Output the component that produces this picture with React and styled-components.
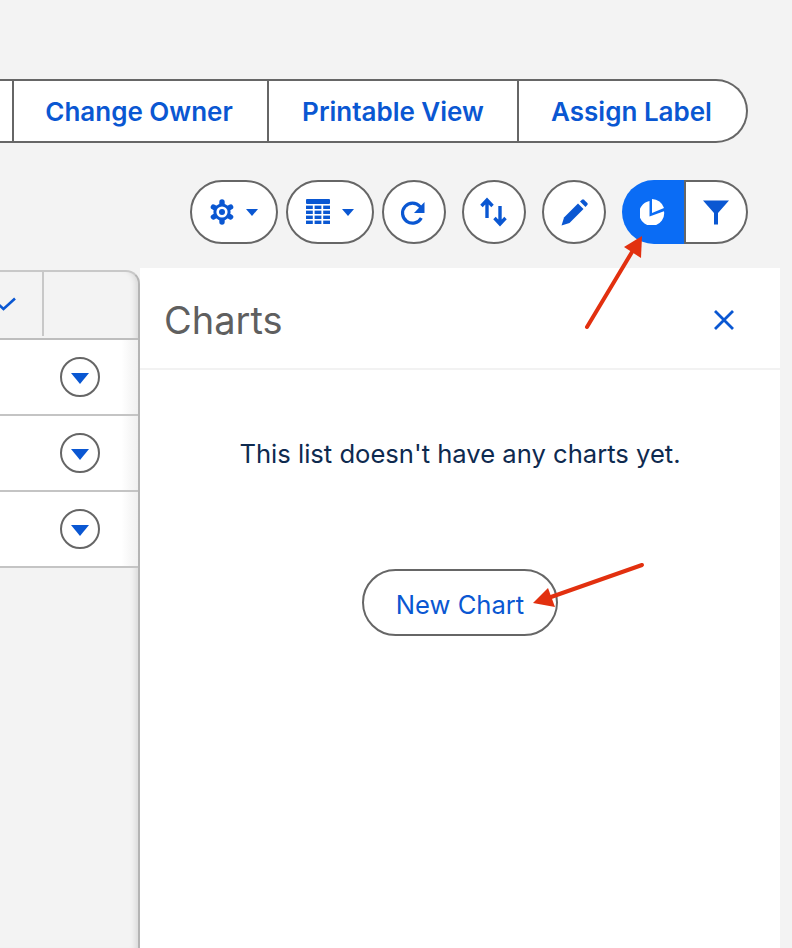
import React from "react";
import styled, { createGlobalStyle } from "styled-components";

const BLUE = "#0a57d2";
const LINE = "#666666";
const RED = "#e2300f";

const Global = createGlobalStyle`
  html, body { margin: 0; padding: 0; background: #f3f3f3; overflow: hidden; }
  body { font-family: Inter, "Liberation Sans", sans-serif; }
  * { box-sizing: border-box; }
`;

const Page = styled.div`
  position: relative;
  width: 792px;
  height: 948px;
  padding-top: 79px;
  overflow: hidden;
`;

const ActionBar = styled.div`
  display: flex;
  width: 748px;
  height: 64px;
  background: #fff;
  border: 2px solid ${LINE};
  border-left: 0;
  border-radius: 0 32px 32px 0;
`;

const Action = styled.div`
  flex: 0 0 ${(p) => p.$w}px;
  display: flex;
  align-items: center;
  justify-content: center;
  padding: 1px ${(p) => p.$inset || 0}px 0 0;
  border-right: ${(p) => (p.$last ? "0" : `2px solid ${LINE}`)};
  color: ${BLUE};
  font-size: 26px;
  font-weight: 600;
`;

const Tools = styled.div`
  display: flex;
  justify-content: flex-end;
  align-items: center;
  width: 748px;
  height: 64px;
  margin-top: 37px;
`;

const Pill = styled.div`
  display: flex;
  align-items: center;
  justify-content: center;
  gap: 12px;
  width: ${(p) => p.$w}px;
  height: 64px;
  margin-left: ${(p) => p.$gap}px;
  background: #fff;
  border: 2px solid ${LINE};
  border-radius: 32px;
`;

const Caret = styled.span`
  width: 0;
  height: 0;
  border-left: 6px solid transparent;
  border-right: 6px solid transparent;
  border-top: 7px solid ${BLUE};
`;

const Toggle = styled.div`
  display: flex;
  width: 126px;
  height: 64px;
  margin-left: 16px;
`;

const ToggleOn = styled.div`
  flex: 0 0 62px;
  display: flex;
  align-items: center;
  justify-content: center;
  background: #0a6cf5;
  border-radius: 32px 0 0 32px;
`;

const ToggleOff = styled.div`
  flex: 1;
  display: flex;
  align-items: center;
  justify-content: center;
  background: #fff;
  border: 2px solid ${LINE};
  border-radius: 0 32px 32px 0;
`;

const Content = styled.div`
  display: flex;
  align-items: flex-start;
  margin-top: 24px;
`;

const TableWrap = styled.div`
  flex: 0 0 140px;
  height: 678px;
  margin-top: 2px;
  border-top: 2px solid #c8c8c8;
  border-right: 2px solid #b4b4b4;
  border-top-right-radius: 14px;
  box-shadow: inset -7px 0 6px -5px rgba(0, 0, 0, 0.12);
`;

const HeadRow = styled.div`
  display: flex;
  height: 68px;
  border-bottom: 2px solid #bdbdbd;
`;

const CheckCell = styled.div`
  flex: 0 0 44px;
  height: 64px;
  display: flex;
  align-items: center;
  border-right: 2px solid #c8c8c8;
`;

const Row = styled.div`
  display: flex;
  align-items: center;
  height: 76px;
  padding-left: 60px;
  background: linear-gradient(to right, #fff 88%, #f0f0f0 100%);
  border-bottom: 2px solid #c4c4c4;
`;

const RowButton = styled.div`
  display: flex;
  align-items: center;
  justify-content: center;
  width: 40px;
  height: 40px;
  background: #fff;
  border: 2px solid ${LINE};
  border-radius: 50%;
`;

const RowCaret = styled.span`
  width: 0;
  height: 0;
  margin-top: 3px;
  border-left: 9px solid transparent;
  border-right: 9px solid transparent;
  border-top: 11px solid ${BLUE};
`;

const Panel = styled.div`
  flex: 0 0 640px;
  height: 680px;
  background: #fff;
`;

const PanelHead = styled.div`
  display: flex;
  align-items: center;
  justify-content: space-between;
  height: 102px;
  padding: 4px 44px 0 24px;
  border-bottom: 2px solid #f2f2f2;
`;

const PanelTitle = styled.h2`
  margin: 0;
  color: #5f5f5f;
  font-size: 38px;
  font-weight: 400;
`;

const Empty = styled.p`
  margin: 68px 0 0;
  text-align: center;
  color: #0e2a4f;
  font-size: 25.6px;
  line-height: 32px;
`;

const NewChart = styled.div`
  display: flex;
  align-items: center;
  justify-content: center;
  width: 196px;
  height: 67px;
  margin: 99px auto 0;
  padding-top: 3px;
  border: 2px solid ${LINE};
  border-radius: 34px;
  color: ${BLUE};
  font-size: 25.6px;
`;

const Overlay = styled.svg`
  position: absolute;
  left: 0;
  top: 0;
  pointer-events: none;
`;

const GearIcon = () => (
  <svg width="24" height="26" viewBox="0 0 24 26">
    <g stroke={BLUE} strokeWidth="5.4" strokeLinecap="round">
      <path d="M12 3V23" />
      <path d="M3.4 8L20.6 18" />
      <path d="M3.4 18L20.6 8" />
    </g>
    <circle cx="12" cy="13" r="8.6" fill={BLUE} />
    <circle cx="12" cy="13" r="5.6" fill="#fff" />
    <circle cx="12" cy="13" r="3" fill={BLUE} />
  </svg>
);

const TableIcon = () => (
  <svg width="24" height="27" viewBox="0 0 24 27" fill={BLUE}>
    <rect x="0" y="0" width="24" height="5" rx="1" />
    {[6.6, 11.6, 16.6, 21.6].map((y) =>
      [0, 8.6, 17.2].map((x) => <rect key={`${x}-${y}`} x={x} y={y} width="6.8" height="3.4" />)
    )}
  </svg>
);

export default function App() {
  return (
    <Page>
      <Global />
      <ActionBar>
        <Action $w={14} />
        <Action $w={255} $inset={3}>Change Owner</Action>
        <Action $w={250}>Printable View</Action>
        <Action $last $w={227} $inset={2}>Assign Label</Action>
      </ActionBar>

      <Tools>
        <Pill $w={88} $gap={0}>
          <GearIcon />
          <Caret />
        </Pill>
        <Pill $w={88} $gap={8}>
          <TableIcon />
          <Caret />
        </Pill>
        <Pill $w={64} $gap={8}>
          <svg width="30" height="30" viewBox="0.5 0 30 30" fill="none">
            <path d="M22.8 21A10 10 0 1 1 21.5 9.5L23 11.5" stroke={BLUE} strokeWidth="3.2" />
            <path d="M26 5V16H15.5Z" fill={BLUE} />
          </svg>
        </Pill>
        <Pill $w={64} $gap={16}>
          <svg width="28" height="30" viewBox="0 0 28 30" fill="none" stroke={BLUE} strokeWidth="3.4">
            <path d="M7 21V3M1.5 9L7 3L12.5 9" />
            <path d="M20 9V27M14.5 21L20 27L25.5 21" />
          </svg>
        </Pill>
        <Pill $w={64} $gap={16}>
          <svg width="27" height="27" viewBox="0 0 27 27" fill={BLUE}>
            <path d="M0.5 26.5L3 18.5L17 4.5L22.5 10L8.5 24Z" />
            <path d="M19 2.5L21 0.7A1.6 1.6 0 0 1 23 0.7L26.3 4A1.6 1.6 0 0 1 26.3 6L24.5 8Z" />
          </svg>
        </Pill>
        <Toggle>
          <ToggleOn>
            <svg width="26" height="26" viewBox="0 0 26 26" fill="#fff">
              <path d="M9.5 2V17.5L24 12.2A12.5 12.5 0 1 1 9.5 2Z" />
              <path d="M12 0V14L24 9A13 13 0 0 0 12 0Z" />
            </svg>
          </ToggleOn>
          <ToggleOff>
            <svg width="26" height="25" viewBox="0 0 26 25" fill={BLUE}>
              <path d="M0 0.5H26L15 13V24.5H11V13Z" />
            </svg>
          </ToggleOff>
        </Toggle>
      </Tools>

      <Content>
        <TableWrap>
          <HeadRow>
            <CheckCell>
              <svg width="18" height="14" viewBox="0 0 18 14" fill="none" stroke={BLUE} strokeWidth="2.6">
                <path d="M-3 6L3.5 12L15 1.5" />
              </svg>
            </CheckCell>
          </HeadRow>
          {[0, 1, 2].map((i) => (
            <Row key={i}>
              <RowButton>
                <RowCaret />
              </RowButton>
            </Row>
          ))}
        </TableWrap>
        <Panel>
          <PanelHead>
            <PanelTitle>Charts</PanelTitle>
            <svg width="24" height="24" viewBox="0 0 24 24" fill="none" stroke={BLUE} strokeWidth="2.8">
              <path d="M3 3L21 21M21 3L3 21" />
            </svg>
          </PanelHead>
          <Empty>This list doesn't have any charts yet.</Empty>
          <NewChart>New Chart</NewChart>
        </Panel>
      </Content>

      <Overlay width="792" height="948" viewBox="0 0 792 948">
        <path d="M587 327L632 252" stroke={RED} strokeWidth="4" strokeLinecap="round" />
        <path d="M642 236L641 258L624 247Z" fill={RED} />
        <path d="M642 565L551 597" stroke={RED} strokeWidth="4" strokeLinecap="round" />
        <path d="M533 603L548 588L555 607Z" fill={RED} />
      </Overlay>
    </Page>
  );
}
